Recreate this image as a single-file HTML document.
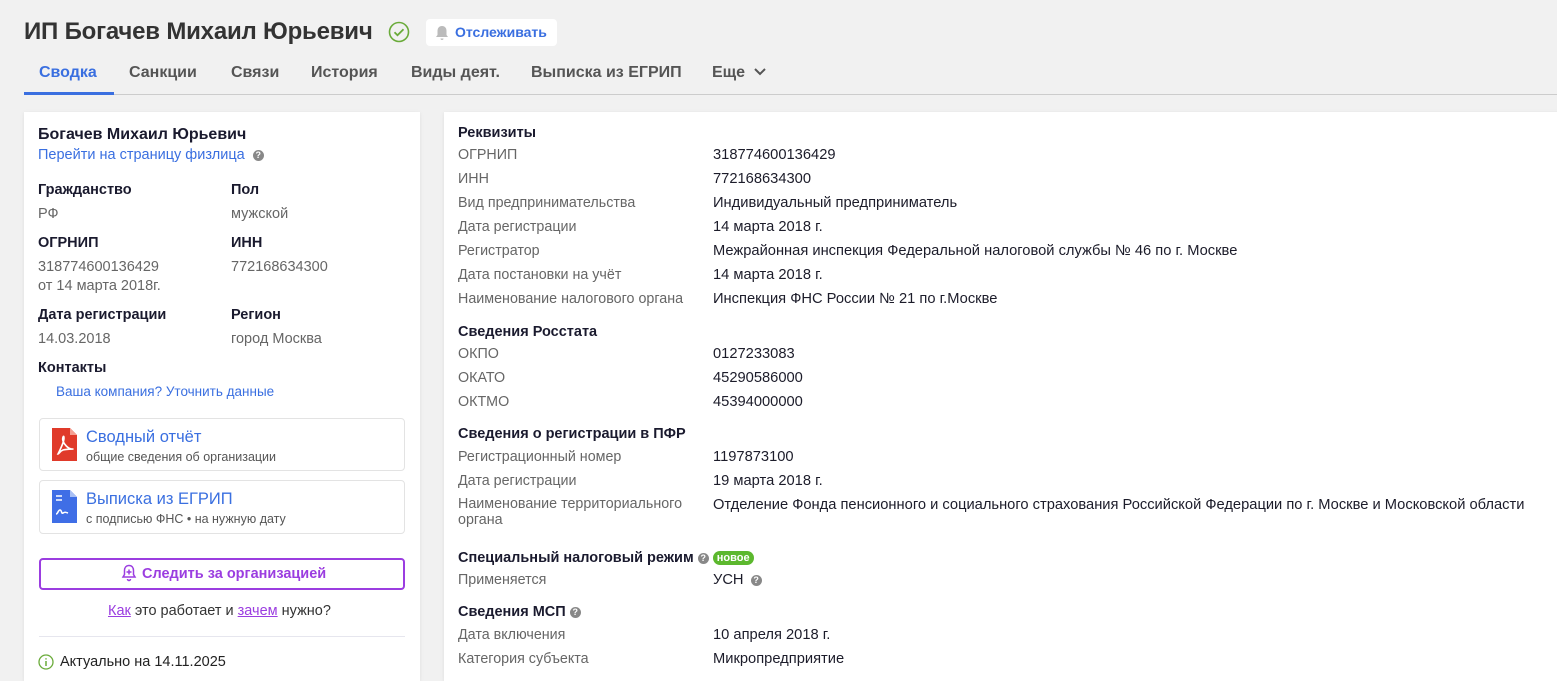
<!DOCTYPE html>
<html><head><meta charset="utf-8"><style>
*{margin:0;padding:0;box-sizing:border-box}
html,body{width:1557px;height:681px;overflow:hidden}
body{background:#f1f1f1;font-family:"Liberation Sans","DejaVu Sans",sans-serif;color:#1c1c2a;position:relative;font-size:14.5px}
.a{position:absolute;white-space:nowrap;line-height:18px}
.t{font-size:24px;font-weight:bold;color:#333;line-height:30px;letter-spacing:-0.2px}
.tab{font-size:16px;color:#555;font-weight:bold;line-height:20px}
.card{position:absolute;background:#fff;box-shadow:0 1px 4px rgba(0,0,0,.08)}
.b{font-weight:bold;color:#1a1a2e}
.g{color:#666}
.r .g{font-size:14.3px}
.r .v{font-size:14.7px}
.bl{color:#3a6fe0}
.q{display:inline-block;width:11px;height:11px;border-radius:50%;background:#888;color:#fff;font-size:9px;line-height:11px;text-align:center;font-weight:bold;vertical-align:1px}
.box{position:absolute;border:1px solid #e3e3e3;border-radius:4px;background:#fff}
</style></head><body>
<div class="a t" style="left:24px;top:17px">ИП Богачев Михаил Юрьевич</div>
<svg class="a" style="left:388px;top:21px" width="22" height="22" viewBox="0 0 22 22"><circle cx="11" cy="11" r="9.5" fill="none" stroke="#6aab3a" stroke-width="1.6"/><path d="M6.5 11.2l3 3 6-6" fill="none" stroke="#6aab3a" stroke-width="1.8"/></svg>
<div class="a" style="left:426px;top:19px;width:131px;height:27px;background:#fff;border-radius:4px"></div>
<svg class="a" style="left:435px;top:25px" width="14" height="16" viewBox="0 0 14 16"><path d="M7 1c-3 0-4.5 2.2-4.5 5v4L1 12h12l-1.5-2V6C11.5 3.2 10 1 7 1zM5.5 13.5a1.5 1.5 0 003 0z" fill="#bbb"/></svg>
<div class="a bl" style="left:455px;top:23px;font-size:14px;font-weight:bold">Отслеживать</div>
<div class="a tab" style="left:39px;top:63px;color:#3a6fe0">Сводка</div>
<div class="a tab" style="left:129px;top:63px">Санкции</div>
<div class="a tab" style="left:231px;top:63px">Связи</div>
<div class="a tab" style="left:311px;top:63px">История</div>
<div class="a tab" style="left:411px;top:63px">Виды деят.</div>
<div class="a tab" style="left:531px;top:63px">Выписка из ЕГРИП</div>
<div class="a tab" style="left:712px;top:63px">Еще</div>
<svg class="a" style="left:753px;top:67px" width="14" height="10" viewBox="0 0 14 10"><path d="M2 2l5 5 5-5" fill="none" stroke="#555" stroke-width="2"/></svg>
<div class="a" style="left:24px;top:94px;width:1533px;height:1px;background:#ccc"></div>
<div class="a" style="left:24px;top:92px;width:90px;height:3px;background:#3a6fe0"></div>

<div class="card" style="left:24px;top:112px;width:396px;height:569px"></div>
<div class="a b" style="left:38px;top:125px;font-size:16px;line-height:20px">Богачев Михаил Юрьевич</div>
<div class="a bl" style="left:38px;top:146px">Перейти на страницу физлица <span class="q" style="margin-left:4px">?</span></div>
<div class="a b" style="left:38px;top:181px">Гражданство</div><div class="a b" style="left:231px;top:181px">Пол</div>
<div class="a g" style="left:38px;top:205px">РФ</div><div class="a g" style="left:231px;top:205px">мужской</div>
<div class="a b" style="left:38px;top:234px">ОГРНИП</div><div class="a b" style="left:231px;top:234px">ИНН</div>
<div class="a g" style="left:38px;top:258px">318774600136429</div><div class="a g" style="left:231px;top:258px">772168634300</div>
<div class="a g" style="left:38px;top:277px">от 14 марта 2018г.</div>
<div class="a b" style="left:38px;top:306px">Дата регистрации</div><div class="a b" style="left:231px;top:306px">Регион</div>
<div class="a g" style="left:38px;top:330px">14.03.2018</div><div class="a g" style="left:231px;top:330px">город Москва</div>
<div class="a b" style="left:38px;top:359px">Контакты</div>
<div class="a bl" style="left:56px;top:383px;font-size:13.5px">Ваша компания? Уточнить данные</div>
<div class="box" style="left:39px;top:418px;width:366px;height:53px"></div>
<svg class="a" style="left:52px;top:428px" width="25" height="33" viewBox="0 0 25 33"><path d="M0 0h18l7 7v26H0z" fill="#e03a2a"/><path d="M18 0v7h7" fill="#f5a093"/><path d="M6 26c3-6 6-12 6-16s-2 0-1 3 5 8 9 8-6 0-9 1-4 4-5 4z" fill="none" stroke="#fff" stroke-width="1.6"/></svg>
<div class="a bl" style="left:86px;top:427px;font-size:16.5px;line-height:20px">Сводный отчёт</div>
<div class="a g" style="left:86px;top:448px;font-size:12.5px;color:#555">общие сведения об организации</div>
<div class="box" style="left:39px;top:480px;width:366px;height:54px"></div>
<svg class="a" style="left:52px;top:490px" width="25" height="33" viewBox="0 0 25 33"><path d="M0 0h18l7 7v26H0z" fill="#3f6ee6"/><path d="M18 0v7h7" fill="#a9c0f5"/><path d="M4 6h6M4 10h6M4 24c2 0 2-4 4-4s1 4 3 3 2-1 5 0" fill="none" stroke="#fff" stroke-width="1.6"/></svg>
<div class="a bl" style="left:86px;top:489px;font-size:16.5px;line-height:20px">Выписка из ЕГРИП</div>
<div class="a g" style="left:86px;top:510px;font-size:12.5px;color:#555">с подписью ФНС • на нужную дату</div>
<div class="a" style="left:39px;top:558px;width:366px;height:32px;border:2px solid #9b3de0;border-radius:4px"></div>
<svg class="a" style="left:121px;top:564px" width="16" height="18" viewBox="0 0 16 18"><path d="M8 1.5c-3 0-4.5 2.2-4.5 5v4L2 13h12l-1.5-2.5v-4C12.5 3.7 11 1.5 8 1.5zM6.5 15a1.5 1.5 0 003 0M8 5.5v5M5.5 8h5" fill="none" stroke="#9b3de0" stroke-width="1.5"/></svg>
<div class="a" style="left:142px;top:565px;color:#9b3de0;font-weight:bold">Следить за организацией</div>
<div class="a" style="left:108px;top:602px;color:#333"><u style="color:#9b3de0">Как</u> это работает и <u style="color:#9b3de0">зачем</u> нужно?</div>
<div class="a" style="left:39px;top:636px;width:366px;height:1px;background:#e6e6ee"></div>
<svg class="a" style="left:38px;top:654px" width="16" height="16" viewBox="0 0 16 16"><circle cx="8" cy="8" r="7" fill="none" stroke="#6aab3a" stroke-width="1.3"/><path d="M8 7v5M8 4.2v1.3" stroke="#6aab3a" stroke-width="1.5"/></svg>
<div class="a" style="left:60px;top:653px;color:#222">Актуально на 14.11.2025</div>

<div class="card" style="left:444px;top:112px;width:1120px;height:569px"></div>
<div class="r">
<div class="a b" style="left:458px;top:124px">Реквизиты</div>
<div class="a g" style="left:458px;top:146px">ОГРНИП</div><div class="a v" style="left:713px;top:146px">318774600136429</div>
<div class="a g" style="left:458px;top:170px">ИНН</div><div class="a v" style="left:713px;top:170px">772168634300</div>
<div class="a g" style="left:458px;top:194px">Вид предпринимательства</div><div class="a v" style="left:713px;top:194px">Индивидуальный предприниматель</div>
<div class="a g" style="left:458px;top:218px">Дата регистрации</div><div class="a v" style="left:713px;top:218px">14 марта 2018 г.</div>
<div class="a g" style="left:458px;top:242px">Регистратор</div><div class="a v" style="left:713px;top:242px">Межрайонная инспекция Федеральной налоговой службы № 46 по г. Москве</div>
<div class="a g" style="left:458px;top:266px">Дата постановки на учёт</div><div class="a v" style="left:713px;top:266px">14 марта 2018 г.</div>
<div class="a g" style="left:458px;top:290px">Наименование налогового органа</div><div class="a v" style="left:713px;top:290px">Инспекция ФНС России № 21 по г.Москве</div>
<div class="a b" style="left:458px;top:323px">Сведения Росстата</div>
<div class="a g" style="left:458px;top:345px">ОКПО</div><div class="a v" style="left:713px;top:345px">0127233083</div>
<div class="a g" style="left:458px;top:369px">ОКАТО</div><div class="a v" style="left:713px;top:369px">45290586000</div>
<div class="a g" style="left:458px;top:393px">ОКТМО</div><div class="a v" style="left:713px;top:393px">45394000000</div>
<div class="a b" style="left:458px;top:425px">Сведения о регистрации в ПФР</div>
<div class="a g" style="left:458px;top:448px">Регистрационный номер</div><div class="a v" style="left:713px;top:448px">1197873100</div>
<div class="a g" style="left:458px;top:472px">Дата регистрации</div><div class="a v" style="left:713px;top:472px">19 марта 2018 г.</div>
<div class="a g" style="left:458px;top:496px;line-height:16px">Наименование территориального<br>органа</div><div class="a v" style="left:713px;top:496px">Отделение Фонда пенсионного и социального страхования Российской Федерации по г. Москве и Московской области</div>
<div class="a b" style="left:458px;top:549px">Специальный налоговый режим <span class="q">?</span> <span style="display:inline-block;background:#5cb82e;color:#fff;font-size:11px;line-height:14px;padding:0 4px;border-radius:7px;vertical-align:1px">новое</span></div>
<div class="a g" style="left:458px;top:571px">Применяется</div><div class="a v" style="left:713px;top:571px">УСН <span class="q" style="margin-left:3px">?</span></div>
<div class="a b" style="left:458px;top:603px">Сведения МСП <span class="q">?</span></div>
<div class="a g" style="left:458px;top:626px">Дата включения</div><div class="a v" style="left:713px;top:626px">10 апреля 2018 г.</div>
<div class="a g" style="left:458px;top:650px">Категория субъекта</div><div class="a v" style="left:713px;top:650px">Микропредприятие</div>
</div>
</body></html>
